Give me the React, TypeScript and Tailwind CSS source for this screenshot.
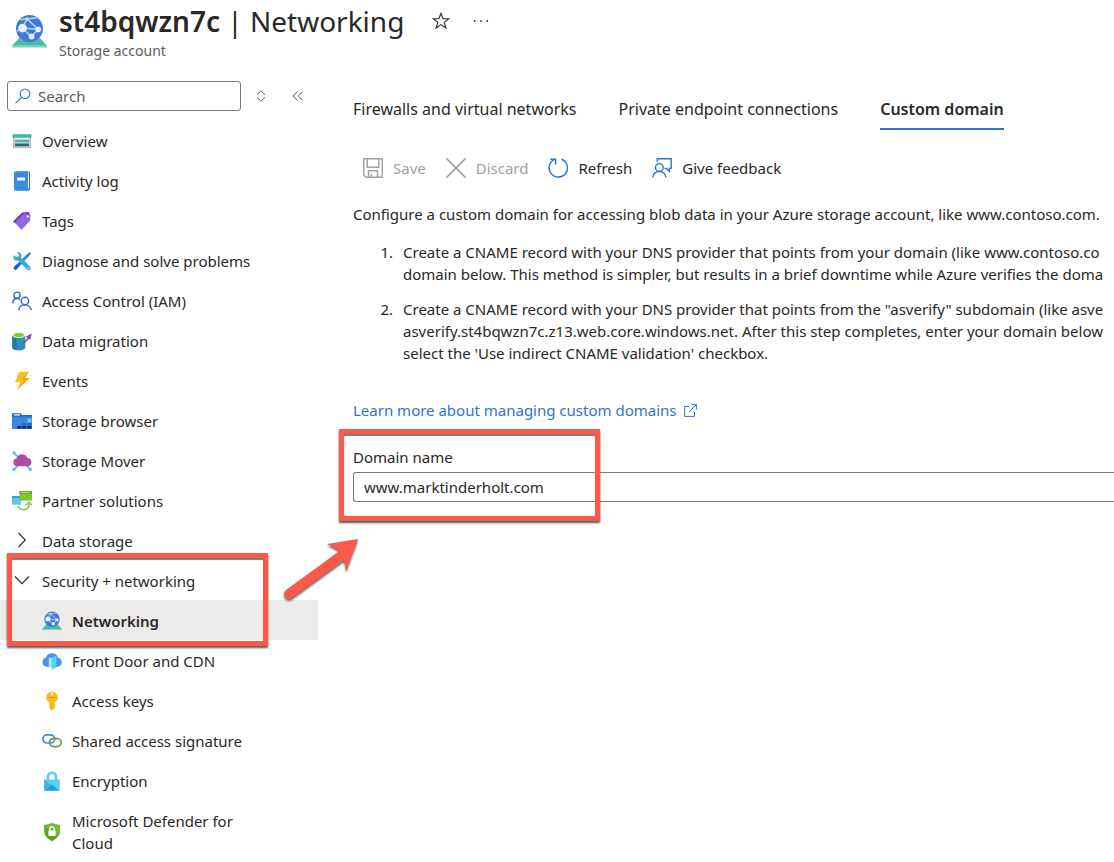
import type { ReactNode } from "react";
import { clsx } from "clsx";

function Svg({
  children,
  size = "size-5",
  box = "0 0 20 20",
}: {
  children: ReactNode;
  size?: string;
  box?: string;
}) {
  return (
    <svg viewBox={box} className={clsx("shrink-0", size)} fill="none" aria-hidden="true">
      {children}
    </svg>
  );
}

function GlobeIcon({ size }: { size?: string }) {
  return (
    <Svg size={size}>
      <path d="M4.2 13.6h11.6L20 18.2H0z" fill="#4fb8a8" />
      <path d="M0 18.2h20v.9H0z" fill="#63e0b9" />
      <circle cx="10" cy="8.3" r="7.7" fill="#3f7ad6" />
      <path
        d="M8.5 2.8 6 8l5 5M8.5 2.8l6.5 6M6 8l9 .8M8.5 2.8l6-.6M8.5 2.8 4.6 3.2M11 13l4-4.2M6 8l-3.4 2"
        stroke="#a9cdf5"
        strokeWidth=".9"
      />
      <circle cx="6" cy="8" r="2.5" fill="#eef4fc" />
      <circle cx="11.2" cy="12.8" r="1.7" fill="#e3edfa" />
      <circle cx="15" cy="8.8" r="1.6" fill="#e3edfa" />
      <circle cx="8.6" cy="2.8" r="1" fill="#c6dcf7" />
    </Svg>
  );
}

function OverviewIcon() {
  return (
    <Svg>
      <path d="M1 6.8h18v9.6a.8.8 0 0 1-.8.8H1.8a.8.8 0 0 1-.8-.8z" fill="#b8bdbd" />
      <path d="M.5 3.2h19v3.6H.5z" fill="#3cb8a4" />
      <path d="M2.6 6.8h14.8v8.4H2.6z" fill="#eef6f5" />
      <path d="M3 8.6h14v2.8H3z" fill="#45b5a5" />
      <path d="M3 12.4h14v2.8H3z" fill="#256b6b" />
    </Svg>
  );
}

function LogIcon() {
  return (
    <Svg>
      <path d="M4 .5h12.500a1.500 1.500 0 0 1 1.500 1.500v16a1.500 1.500 0 0 1-1.500 1.500H4z" fill="#2b5fb5" />
      <path d="M4 1.300h12.300a.8.8 0 0 1 .8.8v15.700H4z" fill="#e6eefb" />
      <path d="M3.200.5h11.800a1 1 0 0 1 1 1v18H3.200A1.200 1.200 0 0 1 2 18.300V1.700A1.200 1.200 0 0 1 3.200.5z" fill="#3a8ae0" />
      <rect x="5" y="6.400" width="8" height="3" rx=".5" fill="#fff" />
    </Svg>
  );
}

function TagIcon() {
  return (
    <Svg>
      <path d="M1 10.500 10.200 1.400 15.800 1a1.500 1.500 0 0 1 1.600 1.500L17.200 7 8.200 16z" fill="#6a36c4" />
      <path d="m3 11.300 8.900-8.500 5.300.2a1.300 1.300 0 0 1 1.200 1.300l-.2 5.300L9.400 19z" fill="#9267dc" />
      <circle cx="15.800" cy="5.500" r="1.600" fill="#fff" stroke="#6a36c4" strokeWidth=".6" />
    </Svg>
  );
}

function ToolsIcon() {
  return (
    <Svg>
      <path d="M17.800 1 19 2.200l-2.300 3.200-5.300 5.200-1.800-1.800 5.200-5.300z" fill="#2c80d0" />
      <path d="m8.200 10.300 1.900 1.900-5.200 6a1.900 1.900 0 0 1-2.800 0 1.900 1.900 0 0 1 0-2.700z" fill="#1f63b5" />
      <path
        d="M5 1.200 6.900 3.200 6.400 5.500 4.100 6 2 4 1.300 6.400a4 4 0 0 0 4.800 3l9 9.100a2 2 0 0 0 2.900 0 2 2 0 0 0 0-2.900L9 6.500A4 4 0 0 0 7.800 1.600 4 4 0 0 0 5 1.200z"
        fill="#37a8e0"
      />
      <circle cx="16.500" cy="17" r=".8" fill="#fff" />
    </Svg>
  );
}

function PeopleIcon() {
  return (
    <Svg>
      <g stroke="#3b5fd0" strokeWidth="1.4">
        <circle cx="5" cy="4.2" r="3.1" />
        <path d="M.8 12.200c0-2.700 1.700-4.700 4.200-4.700 1.300 0 2.400.5 3.200 1.300" />
        <circle cx="13" cy="10" r="3.7" />
        <path d="M6.800 19.200c.2-3.200 2.600-5.500 5.900-5.500s6.200 2.300 6.600 5.500" />
      </g>
    </Svg>
  );
}

function MigrationIcon() {
  return (
    <Svg>
      <path d="M.3 4.200v12.300c0 1.600 2.900 2.900 6.500 2.900s6.500-1.300 6.500-2.900V4.200z" fill="#2e8fb5" />
      <path d="M.3 4.200v12.300c0 1.300 1.800 2.400 4.300 2.700V4.200z" fill="#2378a0" />
      <ellipse cx="6.800" cy="4" rx="6.500" ry="3.100" fill="#e8f4e0" />
      <ellipse cx="6.800" cy="4" rx="5" ry="2.100" fill="#86cc28" />
      <path d="m10.300 12.500 5.200-5.500-1.700-1.600 6-2.800-1.600 6.400-1.400-1.100-5.300 5.600z" fill="#8a4fa0" />
    </Svg>
  );
}

function BoltIcon() {
  return (
    <Svg>
      <path d="M7.200.8h9.800L12.700 7h4.900L4.900 19.500l3.300-8.300H3z" fill="#f8c21c" />
      <path d="M17 .8 12.700 7h4.900L8.600 15.800l3.600-6.900H8.300z" fill="#f0a81c" />
    </Svg>
  );
}

function FolderIcon() {
  return (
    <Svg>
      <path d="M0 2.300h8.500l1.800 1.800H20v13.600H0z" fill="#2563bd" />
      <path d="M2 3.200h6v1.400H2z" fill="#d9ecff" />
      <path d="M0 5.600h20v12.100H0z" fill="#3b87e2" />
      <path d="M15.500 7.500h4v4h-4z" fill="#7cc0f5" />
      <path d="M10.200 12h4v2.500h-4zM15.200 12h4.300v2.500h-4.300z" fill="#2d66b3" />
      <path d="M5.200 14.900h4.300v2.800H5.200zM10.200 14.900h4v2.800h-4zM15.200 14.900h4.300v2.800h-4.300z" fill="#16345f" />
    </Svg>
  );
}

function MoverIcon() {
  return (
    <Svg>
      <path d="m2 2 4.500 4.500M2 18.500l4.500-4.500M18.500 18.500 14 14" stroke="#48b9e6" strokeWidth="1.600" />
      <circle cx="2" cy="1.800" r="1.500" fill="#48b9e6" />
      <circle cx="1.900" cy="18.300" r="1.600" fill="#48b9e6" />
      <circle cx="18.300" cy="18.300" r="1.600" fill="#48b9e6" />
      <path d="M5 15.200a4 4 0 0 1-.4-7.900A5.700 5.700 0 0 1 15.400 7a4.100 4.100 0 0 1-.3 8.200z" fill="#ad4f9e" />
    </Svg>
  );
}

function PartnerIcon() {
  return (
    <Svg>
      <path d="M0 5.200h9v8.500H0z" fill="#63c8ee" />
      <path d="M0 5.200h9V7H0z" fill="#2f93cf" />
      <path d="M7.500.3H20v9.300H7.500z" fill="#7dc82a" />
      <path d="M7.500.3H20v2.500H7.500z" fill="#55a318" />
      <path d="M9 1.300h9v.8H9z" fill="#d8f0bf" />
      <path d="M5.800 15.200c1.200 2.500 3.400 3.500 5.800 3.500 3.200 0 5.500-2.200 5.500-5.600" stroke="#7db84a" strokeWidth="1.500" />
      <path d="m13.800 14.300 3.300-3.300 2.900 3.300" stroke="#7db84a" strokeWidth="1.400" />
    </Svg>
  );
}

function ChevronIcon({ open }: { open: boolean }) {
  return (
    <Svg>
      <path
        d={open ? "m3 5.500 7 7.200 7-7.200" : "m6.500 2 6.800 7-6.800 7"}
        stroke="#323130"
        strokeWidth="1.200"
      />
    </Svg>
  );
}

function CdnIcon() {
  return (
    <Svg>
      <path
        d="M4.700 15.800A4.700 4.700 0 0 1 4 6.600 6.300 6.300 0 0 1 16 6.700a4.600 4.600 0 0 1-.6 9.100z"
        fill="#4b93ea"
      />
      <path d="M6.800 6.800h3v9h-3z" fill="#a8e9fb" />
      <path d="m9.800 6.800 4.500-2v11.600L9.800 19z" fill="#50d3f5" />
    </Svg>
  );
}

function KeyIcon() {
  return (
    <Svg>
      <path
        d="M10 .6a6 6 0 0 1 6 5.600c0 2.300-1.400 4.200-3.300 5l-.2 1.300.8 1-.8 1 .8 1.100-.8 1.200v1L10 19.600l-2.500-1.800v-6.600A5.500 5.500 0 0 1 4 6.200 6 6 0 0 1 10 .6z"
        fill="#fbbe16"
      />
      <circle cx="10" cy="2.900" r="1.300" fill="#fff" />
      <path d="M6.500 6h7v1h-7z" fill="#e08f10" />
      <path d="M8.900 11.500h1v6.300l-1-.8z" fill="#e89c10" />
    </Svg>
  );
}

function LinkRingsIcon() {
  return (
    <Svg>
      <rect x="7.500" y="7.500" width="11.700" height="8.200" rx="4.100" stroke="#5fa83a" strokeWidth="1.700" />
      <rect x=".9" y="3.800" width="11.700" height="8.200" rx="4.100" stroke="#4a86d8" strokeWidth="1.700" />
      <path d="M7.600 11.600a4.100 4.100 0 0 1 4-4.100h3" stroke="#5fa83a" strokeWidth="1.700" />
    </Svg>
  );
}

function LockIcon() {
  return (
    <Svg>
      <path d="M6 9.500V5.700a4 4 0 0 1 8 0v3.800" stroke="#5ccdef" strokeWidth="2.700" />
      <path d="M2.200 8.500h15.600v10.200a1 1 0 0 1-1 1H3.200a1 1 0 0 1-1-1z" fill="#5cd0f2" />
      <path d="m2.200 8.500 7.800 6.200-7.400 4.800-.4-.8z" fill="#45b4e2" />
      <path d="m2.500 19.400 7.500-5.600 7.500 5.600z" fill="#2f97d0" />
    </Svg>
  );
}

function ShieldIcon() {
  return (
    <Svg>
      <path
        d="M10 .8c2.400 1.700 4.900 2.200 7.800 2.200v6.600c0 4.700-3.900 7.500-7.800 9.700-3.900-2.200-7.800-5-7.800-9.700V3C5.100 3 7.600 2.500 10 .8z"
        fill="#5f9f26"
      />
      <path d="M10 .8c2.400 1.700 4.900 2.200 7.800 2.200v6.600c0 2-.7 3.600-1.800 5L4 5.500 2.200 3C5.100 3 7.600 2.500 10 .8z" fill="#75b635" />
      <path d="M7.800 9V6.900a2.200 2.200 0 0 1 4.400 0V9" stroke="#fff" strokeWidth="1.300" />
      <rect x="6.400" y="8.600" width="7.200" height="5.300" rx=".6" fill="#fff" />
    </Svg>
  );
}

function SaveIcon() {
  return (
    <Svg>
      <g stroke="#a19f9d" strokeWidth="1.4">
        <path d="M.8.8h18.400v18.400H3L.8 17z" />
        <path d="M4.200.8v8.500h11.600V.8M5.500 19.200v-6.500h9v6.500M8.200 19.200v-3.400" />
      </g>
    </Svg>
  );
}

function DiscardIcon() {
  return (
    <Svg>
      <path d="m.5.5 19 19M19.500.5l-19 19" stroke="#979593" strokeWidth="1.5" />
    </Svg>
  );
}

function RefreshIcon() {
  return (
    <Svg>
      <path d="M13.500 1.200A9.200 9.200 0 1 1 6.600 1.400" stroke="#2f74d0" strokeWidth="1.500" />
      <path d="M2.400 1.200h5.200v5.300" stroke="#2f74d0" strokeWidth="1.500" />
    </Svg>
  );
}

function FeedbackIcon() {
  return (
    <Svg>
      <g stroke="#2f74d0" strokeWidth="1.4">
        <circle cx="7.300" cy="9.500" r="3.900" />
        <path d="M.7 19.500c.4-3.600 3-6 6.600-6s6.200 2.400 6.600 6" />
        <path d="M5.300 3.800V.8h13.900v9.600h-2v2.700l-3-2.700h-1.800" />
      </g>
    </Svg>
  );
}

type NavItem = { label: string; icon: ReactNode };

const MAIN_ITEMS: NavItem[] = [
  { label: "Overview", icon: <OverviewIcon /> },
  { label: "Activity log", icon: <LogIcon /> },
  { label: "Tags", icon: <TagIcon /> },
  { label: "Diagnose and solve problems", icon: <ToolsIcon /> },
  { label: "Access Control (IAM)", icon: <PeopleIcon /> },
  { label: "Data migration", icon: <MigrationIcon /> },
  { label: "Events", icon: <BoltIcon /> },
  { label: "Storage browser", icon: <FolderIcon /> },
  { label: "Storage Mover", icon: <MoverIcon /> },
  { label: "Partner solutions", icon: <PartnerIcon /> },
];

const SECURITY_ITEMS: NavItem[] = [
  { label: "Front Door and CDN", icon: <CdnIcon /> },
  { label: "Access keys", icon: <KeyIcon /> },
  { label: "Shared access signature", icon: <LinkRingsIcon /> },
  { label: "Encryption", icon: <LockIcon /> },
  { label: "Microsoft Defender for Cloud", icon: <ShieldIcon /> },
];

const TABS = ["Firewalls and virtual networks", "Private endpoint connections", "Custom domain"];
const ACTIVE_TAB = "Custom domain";

const COMMANDS = [
  { label: "Save", icon: <SaveIcon />, disabled: true },
  { label: "Discard", icon: <DiscardIcon />, disabled: true },
  { label: "Refresh", icon: <RefreshIcon />, disabled: false },
  { label: "Give feedback", icon: <FeedbackIcon />, disabled: false },
];

function NavLink({ item, nested, active }: { item: NavItem; nested?: boolean; active?: boolean }) {
  return (
    <a
      href="#"
      aria-current={active ? "page" : undefined}
      className={clsx(
        "flex items-center gap-2.5 pt-2.5 pr-15 pb-2",
        nested ? "pl-[42px]" : "pl-3",
        active && "bg-[#edebe9] font-semibold",
      )}
    >
      {item.icon}
      {item.label}
    </a>
  );
}

function NavGroup({ label, open }: { label: string; open: boolean }) {
  return (
    <button type="button" aria-expanded={open} className="flex w-full items-center gap-2.5 pt-2.5 pb-2 pl-3 text-left">
      <ChevronIcon open={open} />
      {label}
    </button>
  );
}

// Red annotation frame laid over the content it points out
function Highlight({ className }: { className: string }) {
  return (
    <div
      className={clsx(
        "pointer-events-none absolute border-[5px] border-[#fb5a4b] shadow-[0_2px_2px_#555,inset_0_2px_1px_#777]",
        className,
      )}
    />
  );
}

function Header() {
  return (
    <header className="flex items-start gap-3 pl-3">
      <div className="pt-[14px]">
        <GlobeIcon size="size-[35px]" />
      </div>
      <div>
        <div className="flex items-center">
          <h1 className="text-[28px] leading-[42px]">
            <span className="font-semibold">st4bqwzn7c</span> | Networking
          </h1>
          <button type="button" aria-label="Add to favorites" className="ml-7">
            <Svg size="size-[18px]">
              <path
                d="m10 1.500 2.300 6h6.300l-5 4 1.900 6.300L10 14l-5.500 3.800 1.900-6.300-5-4h6.300z"
                stroke="#323130"
                strokeWidth="1.300"
              />
            </Svg>
          </button>
          <button type="button" aria-label="More" className="ml-[22px]">
            <Svg size="size-[18px]">
              <g fill="#323130">
                <circle cx="3" cy="10" r="1" />
                <circle cx="10" cy="10" r="1" />
                <circle cx="17" cy="10" r="1" />
              </g>
            </Svg>
          </button>
        </div>
        <p className="text-[14px] leading-[18px] text-[#605e5c]">Storage account</p>
      </div>
    </header>
  );
}

function Sidebar() {
  return (
    <nav className="w-[318px] shrink-0">
      <div className="mb-[9px] flex items-center pl-[7px]">
        <label className="flex h-[30px] w-[234px] items-center gap-[7px] rounded-[3px] border border-[#7a7876] px-[7px]">
          <Svg size="size-[16px]" box="0 0 16 16">
            <circle cx="10" cy="5.800" r="4.800" stroke="#2f74d0" strokeWidth="1.200" />
            <path d="M6.500 9.300.6 15.200" stroke="#2f74d0" strokeWidth="1.200" />
          </Svg>
          <input
            type="search"
            aria-label="Search"
            placeholder="Search"
            className="w-full min-w-0 outline-none placeholder:text-[#605e5c]"
          />
        </label>
        <button type="button" aria-label="Expand or collapse all" className="ml-[14px]">
          <Svg size="size-3" box="0 0 12 12">
            <path d="M2 4.700 6 .8l4 3.900M2 7.300l4 3.900 4-3.900" stroke="#605e5c" />
          </Svg>
        </button>
        <button type="button" aria-label="Hide menu" className="ml-[25px]">
          <Svg size="size-3" box="0 0 12 12">
            <path d="M5.500 1.500 1 6l4.500 4.500M10.800 1.500 6.300 6l4.500 4.500" stroke="#605e5c" />
          </Svg>
        </button>
      </div>

      {MAIN_ITEMS.map((item) => (
        <NavLink key={item.label} item={item} />
      ))}
      <NavGroup label="Data storage" open={false} />
      <div className="relative">
        <NavGroup label="Security + networking" open />
        <NavLink item={{ label: "Networking", icon: <GlobeIcon /> }} nested active />
        <Highlight className="-top-[7px] -bottom-[6px] left-[7px] w-[261px]" />
        <svg
          viewBox="0 0 80 70"
          fill="none"
          aria-hidden="true"
          className="pointer-events-none absolute -top-[23px] left-[281px] z-10 w-20 drop-shadow-[0_2px_1px_#666]"
        >
          <path d="M8 57 60 19" stroke="#fb5a4b" strokeWidth="10" strokeLinecap="round" />
          <path d="M77 2 46 7l10 5 8 14 1 8z" fill="#fb5a4b" />
        </svg>
      </div>
      {SECURITY_ITEMS.map((item) => (
        <NavLink key={item.label} item={item} nested />
      ))}
    </nav>
  );
}

function CustomDomain() {
  return (
    <main className="min-w-0 flex-1 pt-[17px] pl-[35px]">
      <div role="tablist" className="flex gap-[42px] text-[16px] whitespace-nowrap">
        {TABS.map((tab) => (
          <button
            key={tab}
            type="button"
            role="tab"
            aria-selected={tab === ACTIVE_TAB}
            className={clsx(
              "border-b-2 pb-2",
              tab === ACTIVE_TAB ? "border-[#2f74d0] font-semibold" : "border-transparent",
            )}
          >
            {tab}
          </button>
        ))}
      </div>

      <div className="mt-[27px] flex gap-5 pl-[10px]">
        {COMMANDS.map((cmd) => (
          <button
            key={cmd.label}
            type="button"
            disabled={cmd.disabled}
            className="flex items-center gap-2.5 disabled:text-[#a19f9d]"
          >
            {cmd.icon}
            {cmd.label}
          </button>
        ))}
      </div>

      <div className="mt-6 whitespace-nowrap">
        <p>Configure a custom domain for accessing blob data in your Azure storage account, like www.contoso.com.</p>
        <ol className="mt-4 list-decimal space-y-[13px] pl-11">
          <li className="pl-1.5">
            Create a CNAME record with your DNS provider that points from your domain (like www.contoso.co
            <br />
            domain below. This method is simpler, but results in a brief downtime while Azure verifies the doma
          </li>
          <li className="pl-1.5">
            Create a CNAME record with your DNS provider that points from the "asverify" subdomain (like asve
            <br />
            asverify.st4bqwzn7c.z13.web.core.windows.net. After this step completes, enter your domain below
            <br />
            select the 'Use indirect CNAME validation' checkbox.
          </li>
        </ol>
      </div>

      <a href="#" className="mt-[35px] flex items-center gap-[7px] text-[#2f74d0]">
        Learn more about managing custom domains
        <Svg size="size-[13px]" box="0 0 13 13">
          <path d="M5 2.500H.6v9.900h9.900V8M7.500.6h4.900v4.900M12.400.6 5 8" stroke="#2f74d0" />
        </Svg>
      </a>

      <div className="relative mt-[25px]">
        <label htmlFor="domain" className="block">
          Domain name
        </label>
        <input
          id="domain"
          type="text"
          defaultValue="www.marktinderholt.com"
          className="mt-1 block h-[30px] w-full rounded-l-[3px] border border-r-0 border-[#7a7876] px-[10px] outline-none"
        />
        <Highlight className="-top-[17px] -bottom-[19px] -left-[14px] w-[261px]" />
      </div>
    </main>
  );
}

export default function App() {
  return (
    <div className="overflow-hidden bg-white font-['Noto_Sans','Open_Sans',sans-serif] text-[15px] leading-[22px] text-[#292827]">
      <Header />
      <div className="mt-[21px] flex">
        <Sidebar />
        <CustomDomain />
      </div>
    </div>
  );
}
